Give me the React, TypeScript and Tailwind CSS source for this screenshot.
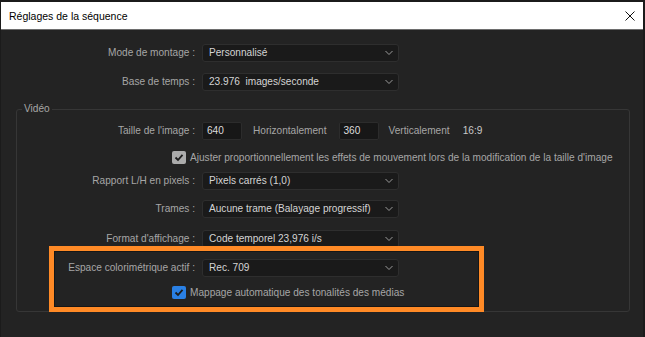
import React from 'react';

const Chevron = () => (
  <svg
    width="8"
    height="5"
    viewBox="0 0 8 5"
    className="absolute right-[5px] top-1/2 -translate-y-1/2"
  >
    <path d="M0.5 0.5 L4 4 L7.5 0.5" fill="none" stroke="#9a9a9a" strokeWidth="1" />
  </svg>
);

const Select = ({ value }: { value: string }) => (
  <div className="relative w-[197px] h-[18px] bg-[#1a1a1a] border border-[#2e2e2e] rounded-[3px] pl-[6px] flex items-center text-[#d4d4d4] whitespace-pre">
    {value}
    <Chevron />
  </div>
);

const NumberInput = ({ value }: { value: string }) => (
  <div className="w-[40px] h-[18px] bg-[#171717] border border-[#2c2c2c] rounded-[2px] pl-[4px] flex items-center text-[#dcdcdc]">
    {value}
  </div>
);

const Checkbox = ({ blue }: { blue?: boolean }) => (
  <div
    className={`w-[14px] h-[13px] rounded-[2px] flex items-center justify-center ${
      blue ? 'bg-[#2a80e4]' : 'bg-[#ababab]'
    }`}
  >
    <svg width="10" height="9" viewBox="0 0 10 9">
      <path d="M1.5 4.5 L4 7 L8.5 1.8" fill="none" stroke="#1d1d1d" strokeWidth="1.8" />
    </svg>
  </div>
);

// one labelled row, label right-aligned in a fixed column
const Row = ({
  label,
  labelWidth,
  className = '',
  children,
}: {
  label: string;
  labelWidth: string;
  className?: string;
  children: React.ReactNode;
}) => (
  <div className={`flex items-center h-[18px] ${className}`}>
    <div className={`${labelWidth} text-right text-[#a6a6a6] whitespace-nowrap`}>{label}</div>
    <div className="ml-[7px] flex items-center">{children}</div>
  </div>
);

export default function App() {
  return (
    <div className="relative w-[645px] h-[337px] overflow-hidden bg-[#1b1b1b] font-['Liberation_Sans',Arial,sans-serif] text-[10.1px] leading-[12px]">
      <div className="ml-[1px] mr-[2px] mt-[2px] h-[335px] bg-[#232323] flex flex-col">
        {/* Title bar */}
        <div className="h-[28px] shrink-0 bg-white border-b border-[#6e6e6e] flex items-center justify-between pl-[8px] pr-[8px]">
          <span className="text-black text-[10.5px]">Réglages de la séquence</span>
          <svg width="10" height="10" viewBox="0 0 10 10">
            <path d="M0.5 0.5 L9.5 9.5 M9.5 0.5 L0.5 9.5" stroke="#111" strokeWidth="1" />
          </svg>
        </div>

        <Row label="Mode de montage :" labelWidth="w-[194px]" className="mt-[14px]">
          <Select value="Personnalisé" />
        </Row>
        <Row label="Base de temps :" labelWidth="w-[194px]" className="mt-[11px]">
          <Select value="23.976  images/seconde" />
        </Row>

        {/* Vidéo group */}
        <fieldset className="ml-[15px] w-[614px] mt-[12px] border border-[#363636] rounded-[3px] pt-[7px] pb-[12px]">
          <legend className="ml-[5px] px-[2px] text-[#a6a6a6]">Vidéo</legend>

          <Row label="Taille de l'image :" labelWidth="w-[178px]">
            <NumberInput value="640" />
            <span className="ml-[11px] text-[#a6a6a6]">Horizontalement</span>
            <div className="ml-[12px]">
              <NumberInput value="360" />
            </div>
            <span className="ml-[10px] text-[#a6a6a6]">Verticalement</span>
            <span className="ml-[13px] text-[#c8c8c8]">16:9</span>
          </Row>

          <div className="flex items-center h-[13px] mt-[11px] pl-[155px]">
            <Checkbox />
            <span className="ml-[4px] text-[#a6a6a6] whitespace-nowrap">
              Ajuster proportionnellement les effets de mouvement lors de la modification de la taille d'image
            </span>
          </div>

          <Row label="Rapport L/H en pixels :" labelWidth="w-[178px]" className="mt-[8px]">
            <Select value="Pixels carrés (1,0)" />
          </Row>
          <Row label="Trames :" labelWidth="w-[178px]" className="mt-[10px]">
            <Select value="Aucune trame (Balayage progressif)" />
          </Row>
          <Row label="Format d'affichage :" labelWidth="w-[178px]" className="mt-[12px]">
            <Select value="Code temporel 23,976 i/s" />
          </Row>
          <Row label="Espace colorimétrique actif :" labelWidth="w-[178px]" className="mt-[11px]">
            <Select value="Rec. 709" />
          </Row>

          <div className="flex items-center h-[13px] mt-[9px] pl-[155px]">
            <Checkbox blue />
            <span className="ml-[4px] text-[#a6a6a6] whitespace-nowrap">
              Mappage automatique des tonalités des médias
            </span>
          </div>
        </fieldset>
      </div>

      {/* Orange highlight drawn over the dialog */}
      <div className="absolute left-[49px] top-[246px] w-[435px] h-[66px] border-[5px] border-[#ff8a26] shadow-[inset_0_0_0_1px_#161616]" />
    </div>
  );
}
